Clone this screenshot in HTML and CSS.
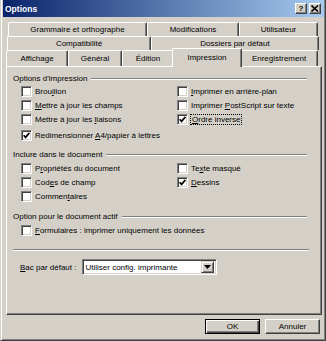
FILE: index.html
```html
<!DOCTYPE html>
<html lang="fr">
<head>
<meta charset="utf-8">
<title>Options</title>
<link rel="stylesheet" href="styles.css">
</head>
<body>
<div class="window">
  <div class="titlebar">
    <span class="title">Options</span>
    <div class="tb-btns">
      <span class="tb-btn help">?</span>
      <span class="tb-btn close"><svg width="8" height="7" viewBox="0 0 8 7"><path d="M0.5 0.5 L7 6.5 M7 0.5 L0.5 6.5" stroke="#000" stroke-width="1.6" fill="none"/></svg></span>
    </div>
  </div>

  <div class="tabs">
    <div class="tabrow row1">
      <div class="tab w139">Grammaire et orthographe</div>
      <div class="tab w92">Modifications</div>
      <div class="tab w79">Utilisateur</div>
    </div>
    <div class="tabrow row2">
      <div class="tab w144">Compatibilité</div>
      <div class="tab w168">Dossiers par défaut</div>
    </div>
    <div class="tabrow row3">
      <div class="tab w62">Affichage</div>
      <div class="tab w54">Général</div>
      <div class="tab w52">Édition</div>
      <div class="tab w66 active">Impression</div>
      <div class="tab w78">Enregistrement</div>
    </div>
  </div>

  <div class="panel">
    <div class="group-head g1"><span>Options d'impression</span><i class="etch"></i></div>
    <div class="opts o1">
      <div class="col">
        <div class="chk"><span class="box"></span><span>Brou<u>i</u>llon</span></div>
        <div class="chk"><span class="box"></span><span><u>M</u>ettre à jour les champs</span></div>
        <div class="chk"><span class="box"></span><span>Mettre à jour les <u>l</u>iaisons</span></div>
        <div class="chk extra"><span class="box checked"><svg width="7" height="7" viewBox="0 0 7 7"><path d="M0.6 3.2 L2.6 5.4 L6.4 0.9" stroke="#000" stroke-width="1.7" fill="none"/></svg></span><span>Redimensionner <u>A</u>4/papier à lettres</span></div>
      </div>
      <div class="col">
        <div class="chk"><span class="box"></span><span><u>I</u>mprimer en arrière-plan</span></div>
        <div class="chk"><span class="box"></span><span>Imprimer <u>P</u>ostScript sur texte</span></div>
        <div class="chk"><span class="box checked"><svg width="7" height="7" viewBox="0 0 7 7"><path d="M0.6 3.2 L2.6 5.4 L6.4 0.9" stroke="#000" stroke-width="1.7" fill="none"/></svg></span><span class="focus"><u>O</u>rdre inverse</span></div>
      </div>
    </div>

    <div class="group-head g2"><span>Inclure dans le document</span><i class="etch"></i></div>
    <div class="opts o2">
      <div class="col">
        <div class="chk"><span class="box"></span><span>P<u>r</u>opriétés du document</span></div>
        <div class="chk"><span class="box"></span><span>Cod<u>e</u>s de champ</span></div>
        <div class="chk"><span class="box"></span><span>Commen<u>t</u>aires</span></div>
      </div>
      <div class="col">
        <div class="chk"><span class="box"></span><span>Te<u>x</u>te masqué</span></div>
        <div class="chk"><span class="box checked"><svg width="7" height="7" viewBox="0 0 7 7"><path d="M0.6 3.2 L2.6 5.4 L6.4 0.9" stroke="#000" stroke-width="1.7" fill="none"/></svg></span><span><u>D</u>essins</span></div>
      </div>
    </div>

    <div class="group-head g3"><span>Option pour le document actif</span><i class="etch"></i></div>
    <div class="opts o3">
      <div class="col">
        <div class="chk"><span class="box"></span><span><u>F</u>ormulaires : imprimer uniquement les données</span></div>
      </div>
    </div>

    <div class="sep"></div>

    <div class="bac">
      <span class="bac-label"><u>B</u>ac par défaut :</span>
      <div class="select">
        <span class="sel-text">Utiliser config. imprimante</span>
        <span class="sel-btn"><svg width="7" height="4" viewBox="0 0 7 4"><path d="M0 0 H7 L3.5 4 Z" fill="#000"/></svg></span>
      </div>
    </div>
  </div>

  <div class="buttons">
    <div class="btn default">OK</div>
    <div class="btn">Annuler</div>
  </div>
</div>
</body>
</html>
```

FILE: styles.css
```css
html, body {
  margin: 0;
  padding: 0;
  background: #d4d0c8;
}

body {
  font-family: "Liberation Sans", Arial, sans-serif;
  font-size: 8px;
  color: #000;
}

.window {
  width: 326px;
  height: 341px;
  box-sizing: border-box;
  background: #d4d0c8;
  border-left: 1px solid #d4d0c8;
  border-right: 1px solid #404040;
  border-bottom: 1px solid #404040;
  box-shadow: inset 1px 0 #ffffff, inset -1px -1px #808080;
  padding: 0 1px 2px 2px;
}

/* Title bar */
.titlebar {
  height: 17px;
  background: linear-gradient(to right, #0a246a, #a6caf0);
  display: flex;
  align-items: center;
  justify-content: space-between;
  padding-left: 2px;
}

.title {
  color: #fff;
  font-weight: bold;
  font-size: 8.5px;
}

.tb-btns {
  display: flex;
  gap: 2px;
  margin-right: 3px;
}

.tb-btn {
  width: 12px;
  height: 11px;
  box-sizing: border-box;
  background: #d4d0c8;
  border-top: 1px solid #fff;
  border-left: 1px solid #fff;
  border-right: 1px solid #404040;
  border-bottom: 1px solid #404040;
  box-shadow: inset -1px -1px #808080;
  display: flex;
  align-items: center;
  justify-content: center;
  font-weight: bold;
  font-size: 8px;
  line-height: 9px;
}

/* Tabs */
.tabs {
  margin-top: 5px;
}

.tabrow {
  display: flex;
  align-items: flex-start;
}

.row1 { height: 14px; margin-left: 5px; }
.row2 { height: 14px; margin-left: 4px; }
.row3 { height: 16px; margin-left: 3px; }

.tab {
  box-sizing: border-box;
  height: 100%;
  background: #d4d0c8;
  border-top: 1px solid #fff;
  border-left: 1px solid #fff;
  border-right: 1px solid #404040;
  box-shadow: inset -1px 0 #808080;
  border-radius: 2px 2px 0 0;
  text-align: center;
  line-height: 14px;
  white-space: nowrap;
}

.row1 .tab, .row2 .tab { line-height: 13px; }
.row3 .tab { line-height: 16px; }

.w139 { width: 139px; }
.w92 { width: 92px; }
.w79 { width: 79px; }
.w144 { width: 144px; }
.w168 { width: 168px; }
.w62 { width: 62px; }
.w54 { width: 54px; }
.w52 { width: 52px; }
.w66 { width: 66px; }
.w78 { width: 78px; }

.row3 .tab.active {
  width: 70px;
  height: 19px;
  margin: -2px -2px -1px;
  line-height: 17px;
  position: relative;
  z-index: 2;
}

/* Panel */
.panel {
  position: relative;
  z-index: 1;
  margin-left: 3px;
  width: 316px;
  height: 249px;
  box-sizing: border-box;
  border-top: 1px solid #fff;
  border-left: 1px solid #fff;
  border-right: 1px solid #404040;
  border-bottom: 1px solid #404040;
  box-shadow: inset -1px -1px #808080;
}

.group-head {
  display: flex;
  align-items: center;
  height: 11px;
  margin-left: 6px;
  margin-right: 14px;
  white-space: nowrap;
}

.g1 { margin-top: 6px; }
.g2 { margin-top: 7px; }
.g3 { margin-top: 8px; }

.etch {
  flex: 1;
  height: 0;
  border-top: 1px solid #808080;
  border-bottom: 1px solid #fff;
  margin-left: 4px;
}

.opts {
  display: grid;
  grid-template-columns: 156px 1fr;
  padding-left: 14px;
}

.o2, .o3 { margin-top: 1px; }
.o3 { grid-template-columns: 1fr; }

.col {
  display: flex;
  flex-direction: column;
}

.chk {
  height: 14px;
  display: flex;
  align-items: center;
  white-space: nowrap;
}

.chk.extra { margin-top: 2px; }

.box {
  width: 11px;
  height: 11px;
  flex: none;
  box-sizing: border-box;
  background: #fff;
  border-top: 1px solid #808080;
  border-left: 1px solid #808080;
  border-right: 1px solid #fff;
  border-bottom: 1px solid #fff;
  box-shadow: inset 1px 1px #404040, inset -1px -1px #d4d0c8;
  margin-right: 3px;
  display: flex;
  align-items: center;
  justify-content: center;
}

.box svg { display: block; }

.focus {
  outline: 1px dotted #000;
  outline-offset: 0;
  padding: 0 1px;
}

u { text-decoration: underline; text-underline-offset: 1px; }

.sep {
  margin: 12px 12px 0 6px;
  height: 0;
  border-top: 1px solid #808080;
  border-bottom: 1px solid #fff;
}

.bac {
  display: flex;
  align-items: center;
  margin-top: 8px;
  padding-left: 13px;
  height: 16px;
}

.bac-label { margin-right: 5px; white-space: nowrap; }

.select {
  width: 135px;
  height: 16px;
  box-sizing: border-box;
  background: #fff;
  border-top: 1px solid #808080;
  border-left: 1px solid #808080;
  border-right: 1px solid #fff;
  border-bottom: 1px solid #fff;
  box-shadow: inset 1px 1px #404040, inset -1px -1px #d4d0c8;
  display: flex;
  align-items: center;
  padding: 2px;
}

.sel-text {
  flex: 1;
  padding-left: 1px;
  white-space: nowrap;
}

.sel-btn {
  width: 13px;
  height: 12px;
  box-sizing: border-box;
  background: #d4d0c8;
  border-top: 1px solid #d4d0c8;
  border-left: 1px solid #d4d0c8;
  border-right: 1px solid #404040;
  border-bottom: 1px solid #404040;
  box-shadow: inset 1px 1px #fff, inset -1px -1px #808080;
  display: flex;
  align-items: center;
  justify-content: center;
}

.sel-btn svg { display: block; }

/* Buttons */
.buttons {
  display: flex;
  justify-content: flex-end;
  gap: 5px;
  margin-top: 4px;
  padding-right: 4px;
}

.btn {
  width: 55px;
  height: 15px;
  box-sizing: border-box;
  background: #d4d0c8;
  border-top: 1px solid #fff;
  border-left: 1px solid #fff;
  border-right: 1px solid #404040;
  border-bottom: 1px solid #404040;
  box-shadow: inset -1px -1px #808080;
  text-align: center;
  line-height: 13px;
}

.btn.default {
  border: 1px solid #000;
  box-shadow: inset 1px 1px #fff, inset -1px -1px #404040, inset -2px -2px #808080;
}
```
